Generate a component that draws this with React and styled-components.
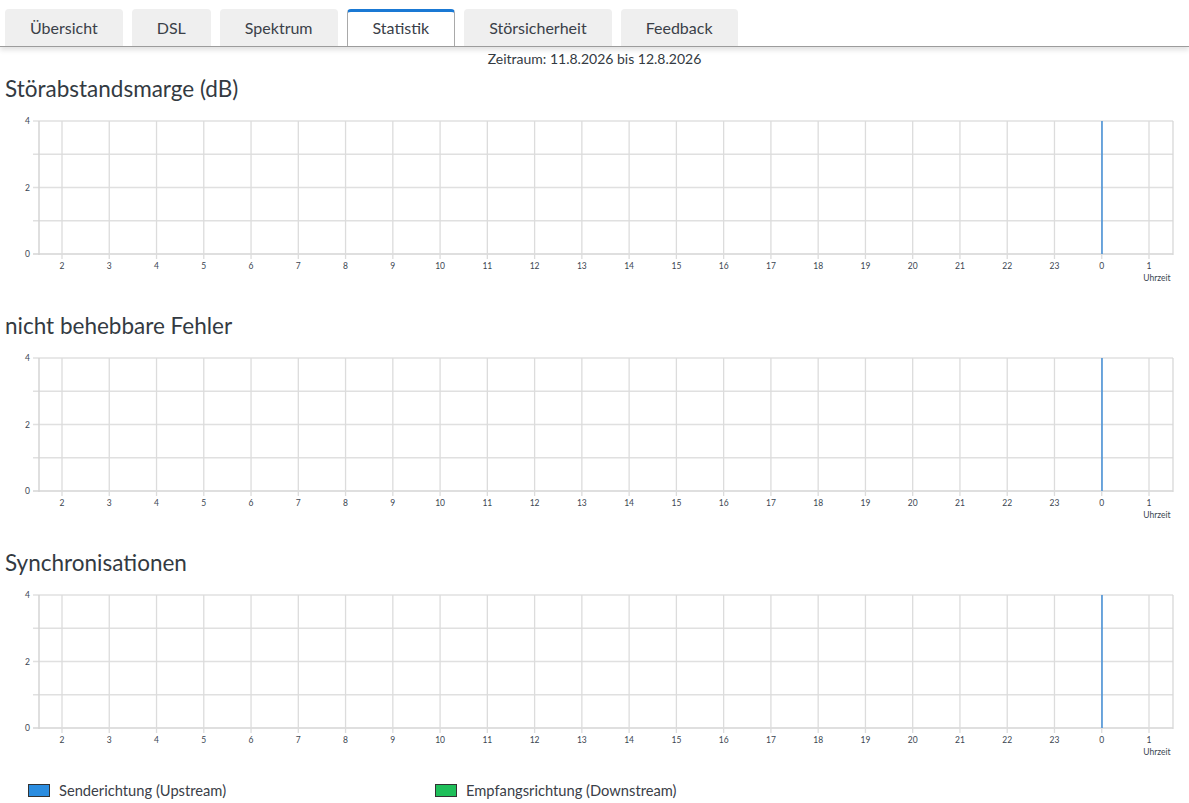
import React from "react";
import styled, { createGlobalStyle } from "styled-components";

const GlobalStyle = createGlobalStyle`
  body {
    margin: 0;
    background: #ffffff;
    font-family: Lato, "Open Sans", sans-serif;
    color: #333a42;
  }
`;

const TabBar = styled.div`
  display: flex;
  gap: 9px;
  padding: 9px 5px 0;
  height: 37px;
  border-bottom: 1px solid #9c9c9c;
  box-shadow: 0 3px 5px rgba(0, 0, 0, 0.12);
`;

const Tab = styled.div`
  display: flex;
  align-items: center;
  justify-content: center;
  padding: 0 25px ${(p) => (p.$active ? "3px" : "0")};
  font-size: 16px;
  color: #3a4048;
  border-radius: 4px 4px 0 0;
  background: ${(p) => (p.$active ? "#ffffff" : "#efefef")};
  border: ${(p) => (p.$active ? "1px solid #a9a9a9" : "none")};
  border-top: ${(p) => (p.$active ? "3px solid #1a79d4" : "none")};
  border-bottom: none;
  margin-bottom: ${(p) => (p.$active ? "-1px" : "0")};
  height: ${(p) => (p.$active ? "31px" : "37px")};
`;

const Period = styled.div`
  text-align: center;
  font-size: 14px;
  line-height: 18px;
  padding-top: 3px;
  color: #333a42;
`;

const Section = styled.section`
  padding-bottom: 21px;
`;

const Heading = styled.h2`
  margin: 0;
  padding: 6px 0 0 5px;
  font-size: 22.5px;
  font-weight: 400;
  line-height: 30px;
  color: #333a42;
`;

const Legend = styled.div`
  display: flex;
  padding: 2px 0 0 28px;
`;

const LegendItem = styled.div`
  display: flex;
  align-items: center;
  gap: 9px;
  width: 407px;
  font-size: 14.7px;
  line-height: 18px;
  color: #3a4048;
`;

const Swatch = styled.span`
  display: inline-block;
  width: 20px;
  height: 11px;
  border: 1px solid #333;
  background: ${(p) => p.$color};
`;

const hours = [2, 3, 4, 5, 6, 7, 8, 9, 10, 11, 12, 13, 14, 15, 16, 17, 18, 19, 20, 21, 22, 23, 0, 1];
const LEFT = 39;
const RIGHT = 1173;
const TOP = 17;
const BOTTOM = 150;
const X0 = 62;
const STEP = (1149 - 62) / 23;

function Chart() {
  const rows = [0, 1, 2, 3, 4].map((i) => TOP + ((BOTTOM - TOP) * i) / 4);
  return (
    <svg width="1189" height="180" style={{ display: "block" }}>
      {rows.map((y, i) => (
        <line key={i} x1={33} x2={RIGHT} y1={y} y2={y} stroke={i === 4 ? "#d4d4d4" : "#e0e0e0"} strokeWidth="1.3" />
      ))}
      <line x1={LEFT} x2={LEFT} y1={TOP} y2={BOTTOM + 1} stroke="#d4d4d4" strokeWidth="1.5" />
      <line x1={RIGHT} x2={RIGHT} y1={TOP} y2={BOTTOM + 1} stroke="#d8d8d8" strokeWidth="1.3" />
      {hours.map((h, i) => {
        const x = X0 + STEP * i;
        return (
          <g key={h}>
            <line x1={x} x2={x} y1={TOP} y2={BOTTOM + 5} stroke="#dcdcdc" strokeWidth="1.3" />
            <text x={x} y={BOTTOM + 15} fontSize="8.5" textAnchor="middle" fill="#3b4652" fontFamily="Lato, sans-serif">
              {h}
            </text>
          </g>
        );
      })}
      {[
        ["4", TOP],
        ["2", TOP + (BOTTOM - TOP) / 2],
        ["0", BOTTOM],
      ].map(([t, y]) => (
        <text key={t} x={30} y={y + 3} fontSize="8.5" textAnchor="end" fill="#3b4652" fontFamily="Lato, sans-serif">
          {t}
        </text>
      ))}
      <line x1={1102} x2={1102} y1={TOP} y2={BOTTOM} stroke="#1a79d4" strokeWidth="1.2" />
      <text x={1157} y={BOTTOM + 27} fontSize="8.5" textAnchor="middle" fill="#3b4652" fontFamily="Lato, sans-serif">
        Uhrzeit
      </text>
    </svg>
  );
}

const tabs = ["Übersicht", "DSL", "Spektrum", "Statistik", "Störsicherheit", "Feedback"];
const charts = ["Störabstandsmarge (dB)", "nicht behebbare Fehler", "Synchronisationen"];

export default function App() {
  return (
    <>
      <GlobalStyle />
      <TabBar>
        {tabs.map((t) => (
          <Tab key={t} $active={t === "Statistik"}>
            {t}
          </Tab>
        ))}
      </TabBar>
      <Period>Zeitraum: 11.8.2026 bis 12.8.2026</Period>
      {charts.map((c) => (
        <Section key={c}>
          <Heading>{c}</Heading>
          <Chart />
        </Section>
      ))}
      <Legend>
        <LegendItem>
          <Swatch $color="#2b8de0" />
          Senderichtung (Upstream)
        </LegendItem>
        <LegendItem>
          <Swatch $color="#1fbf5a" />
          Empfangsrichtung (Downstream)
        </LegendItem>
      </Legend>
    </>
  );
}
